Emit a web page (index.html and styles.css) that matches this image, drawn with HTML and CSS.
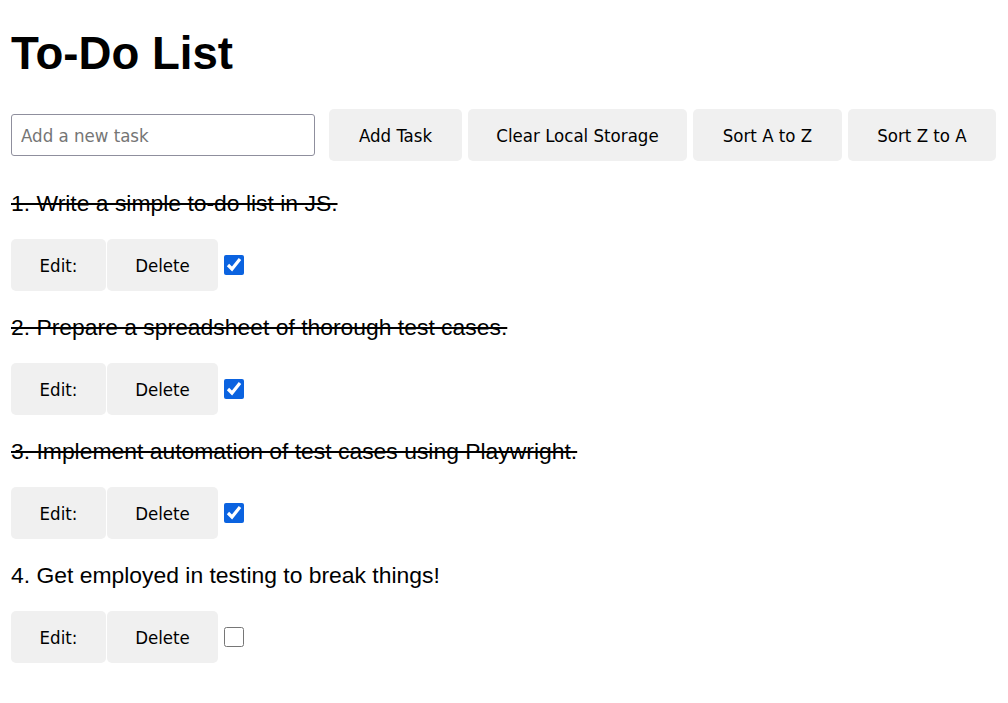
FILE: index.html
```html
<!DOCTYPE html>
<html lang="en">
<head>
<meta charset="utf-8">
<title>To-Do List</title>
<link rel="stylesheet" href="styles.css">
</head>
<body>
<h1 class="title">To-Do List</h1>
<div class="controls">
  <input class="task-input" type="text" placeholder="Add a new task">
  <div class="actions">
    <button class="btn btn-add">Add Task</button>
    <button class="btn btn-clear">Clear Local Storage</button>
    <button class="btn btn-sort-az">Sort A to Z</button>
    <button class="btn btn-sort-za">Sort Z to A</button>
  </div>
</div>
<ul class="tasks">
  <li class="task">
    <span class="task-text done">1. Write a simple to-do list in JS.</span>
    <div class="task-actions">
      <button class="btn btn-edit">Edit:</button><button class="btn btn-delete">Delete</button>
      <input class="check" type="checkbox" checked>
    </div>
  </li>
  <li class="task">
    <span class="task-text done">2. Prepare a spreadsheet of thorough test cases.</span>
    <div class="task-actions">
      <button class="btn btn-edit">Edit:</button><button class="btn btn-delete">Delete</button>
      <input class="check" type="checkbox" checked>
    </div>
  </li>
  <li class="task">
    <span class="task-text done">3. Implement automation of test cases using Playwright.</span>
    <div class="task-actions">
      <button class="btn btn-edit">Edit:</button><button class="btn btn-delete">Delete</button>
      <input class="check" type="checkbox" checked>
    </div>
  </li>
  <li class="task">
    <span class="task-text">4. Get employed in testing to break things!</span>
    <div class="task-actions">
      <button class="btn btn-edit">Edit:</button><button class="btn btn-delete">Delete</button>
      <input class="check" type="checkbox">
    </div>
  </li>
</ul>
</body>
</html>
```

FILE: styles.css
```css
html, body {
  background: #ffffff;
}

body {
  margin: 0;
  padding: 0 11px;
  font-family: "Liberation Sans", Arial, sans-serif;
  font-size: 22.9px;
  color: #000;
}

.title {
  margin: 0;
  padding-top: 28px;
  font-size: 45.6px;
  font-weight: bold;
  line-height: 52px;
}

.controls {
  display: flex;
  align-items: center;
  margin-top: 29px;
}

.task-input {
  box-sizing: border-box;
  width: 304px;
  height: 42px;
  margin: 0 14px 0 0;
  padding: 0 9px;
  border: 1px solid #8f8f9d;
  border-radius: 3px;
  font-family: "DejaVu Sans Condensed", "DejaVu Sans", sans-serif;
  font-stretch: condensed;
  font-size: 18.5px;
  color: #000;
  background: #fff;
}

.task-input::placeholder {
  color: #757575;
}

.actions {
  display: flex;
  gap: 6px;
}

.btn {
  box-sizing: border-box;
  height: 52px;
  margin: 0;
  padding: 0;
  border: none;
  border-radius: 5px;
  background: #f0f0f0;
  color: #000;
  font-family: "DejaVu Sans Condensed", "DejaVu Sans", sans-serif;
  font-stretch: condensed;
  font-size: 18.5px;
  cursor: pointer;
}

.btn-add { width: 133px; }
.btn-clear { width: 219px; }
.btn-sort-az { width: 149px; }
.btn-sort-za { width: 148px; }

.tasks {
  list-style: none;
  margin: 29px 0 0;
  padding: 0;
}

.task {
  margin-bottom: 23px;
}

.task-text {
  display: block;
  line-height: 26px;
  margin-bottom: 23px;
}

.task-text.done {
  text-decoration: line-through;
}

.task-actions {
  display: flex;
  align-items: center;
}

.btn-edit {
  width: 95px;
  margin-right: 1px;
}

.btn-delete {
  width: 111px;
}

.check {
  width: 20px;
  height: 20px;
  margin: 0 0 0 6px;
  accent-color: #0b63e0;
}
```
